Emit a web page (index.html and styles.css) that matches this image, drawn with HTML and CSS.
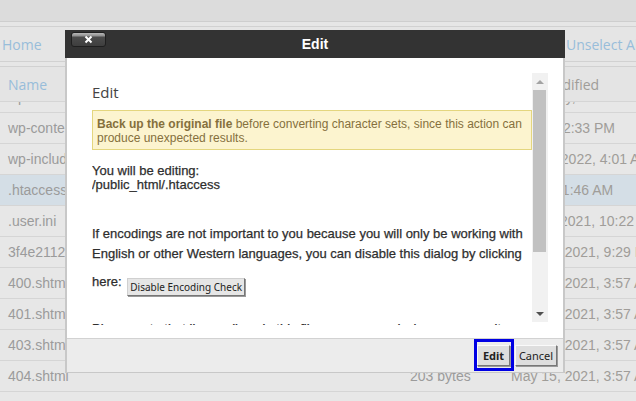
FILE: index.html
```html
<!DOCTYPE html>
<html lang="en">

<head>
    <meta charset="UTF-8">
    <meta name="viewport" content="width=device-width, initial-scale=1.0">
    <title>File Manager</title>
    <link rel="stylesheet" href="styles.css">
</head>

<body>
    <!-- file manager behind the dialog -->
    <div class="fm">
        <div class="fm-top"></div>
        <div class="fm-strip"></div>
        <div class="fm-toolbar">
            <span class="tool">Home</span>
            <span class="tool">Unselect All</span>
        </div>
        <div class="fm-strip"></div>
        <div class="fm-row fm-head">
            <span class="col-name">Name</span>
            <span class="col-size">Size</span>
            <span class="col-date">Last Modified</span>
        </div>
        <div class="fm-list">
            <div class="fm-row first-row">
                <span class="col-name">wp-admin</span><span class="col-size">4 KB</span><span class="col-date">Yesterday, 8:15 PM</span>
            </div>
            <div class="fm-row">
                <span class="col-name">wp-content</span><span class="col-size">4 KB</span><span class="col-date">Today, 12:33 PM</span>
            </div>
            <div class="fm-row">
                <span class="col-name">wp-includes</span><span class="col-size">12 KB</span><span class="col-date">Jan 10, 2022, 4:01 AM</span>
            </div>
            <div class="fm-row selected">
                <span class="col-name">.htaccess</span><span class="col-size">1.08 KB</span><span class="col-date">Today, 11:46 AM</span>
            </div>
            <div class="fm-row">
                <span class="col-name">.user.ini</span><span class="col-size">148 bytes</span><span class="col-date">Apr 16, 2021, 10:22 PM</span>
            </div>
            <div class="fm-row">
                <span class="col-name">3f4e2112a9c0.html</span><span class="col-size">52 bytes</span><span class="col-date">May 25, 2021, 9:29 PM</span>
            </div>
            <div class="fm-row">
                <span class="col-name">400.shtml</span><span class="col-size">203 bytes</span><span class="col-date">May 15, 2021, 3:57 AM</span>
            </div>
            <div class="fm-row">
                <span class="col-name">401.shtml</span><span class="col-size">203 bytes</span><span class="col-date">May 15, 2021, 3:57 AM</span>
            </div>
            <div class="fm-row">
                <span class="col-name">403.shtml</span><span class="col-size">203 bytes</span><span class="col-date">May 15, 2021, 3:57 AM</span>
            </div>
            <div class="fm-row">
                <span class="col-name">404.shtml</span><span class="col-size">203 bytes</span><span class="col-date">May 15, 2021, 3:57 AM</span>
            </div>
            <div class="fm-row">
                <span class="col-name">500.shtml</span><span class="col-size">203 bytes</span><span class="col-date">May 15, 2021, 3:57 AM</span>
            </div>
        </div>
    </div>

    <!-- Edit dialog -->
    <div class="dialog">
        <div class="dlg-titlebar">
            <button class="dlg-close" aria-label="Close">
                <svg width="9" height="9" viewBox="0 0 9 9">
                    <path d="M1.5 1.5 L7.5 7.5 M7.5 1.5 L1.5 7.5" stroke="#fff" stroke-width="2" fill="none" />
                </svg>
            </button>
            <div class="dlg-title">Edit</div>
        </div>
        <div class="dlg-panel">
            <div class="dlg-body">
                <div class="dlg-scroll">
                    <h2 class="dlg-heading">Edit</h2>
                    <div class="warning">
                        <strong>Back up the original file</strong> before converting character sets, since this action can produce unexpected results.
                    </div>
                    <p class="editing">You will be editing:<br>/public_html/.htaccess</p>
                    <p class="note">If encodings are not important to you because you will only be working with English or other Western languages, you can disable this dialog by clicking</p>
                    <div class="note here">here: <button class="btn-small">Disable Encoding Check</button></div>
                    <p class="note next">Please note that line endings in this file are preserved when you save it.</p>
                </div>
                <div class="scrollbar">
                    <div class="sb-arrow"><span class="tri-up"></span></div>
                    <div class="sb-thumb"></div>
                    <div class="sb-track"></div>
                    <div class="sb-arrow"><span class="tri-down"></span></div>
                </div>
            </div>
            <div class="dlg-footer">
                <span class="focus-ring"><button class="btn btn-edit">Edit</button></span>
                <button class="btn btn-cancel">Cancel</button>
            </div>
        </div>
    </div>
</body>

</html>
```

FILE: styles.css
```css
* {
    margin: 0;
    padding: 0;
    box-sizing: border-box;
}

body {
    width: 636px;
    height: 401px;
    overflow: hidden;
    position: relative;
    background-color: #e6e6e6;
    font-family: "Liberation Sans", Arial, sans-serif;
}

/* file manager (washed out behind the overlay) */
.fm-top {
    height: 22px;
    background-color: #dcdcdc;
    border-bottom: 1px solid #cecece;
}

.fm-strip {
    height: 5px;
    background-color: #e6e6e6;
    border-bottom: 1px solid #d1d1d1;
}

.fm-toolbar {
    height: 35px;
    display: grid;
    grid-template-columns: 564px auto;
    align-items: center;
    padding-left: 2px;
    background-color: #e5e5e5;
    border-bottom: 1px solid #d1d1d1;
    white-space: nowrap;
}

.tool {
    font-family: "Open Sans", sans-serif;
    font-size: 14px;
    color: #98bdda;
}

.fm-row {
    display: grid;
    grid-template-columns: 400px 111px 1fr;
    align-items: center;
    height: 31px;
    border-bottom: 1px solid #d5d5d5;
    background-color: #e7e7e7;
    font-size: 14px;
    color: #9b9b9b;
    white-space: nowrap;
}

.fm-head {
    height: 35px;
    background-color: #e4e4e4;
    font-family: "Open Sans", sans-serif;
    color: #98bdda;
}

.fm-list {
    display: flow-root;
    height: 299px;
    overflow: hidden;
}

.first-row {
    margin-top: -20px;
}

.fm-row.selected {
    background-color: #d4dee6;
}

.col-name {
    padding-left: 8px;
    overflow: hidden;
}

.col-size {
    padding-left: 10px;
}

.col-date {
    color: #a09d99;
}

/* dialog */
.dialog {
    position: absolute;
    left: 65px;
    top: 30px;
    width: 500px;
}

.dlg-titlebar {
    height: 28px;
    display: grid;
    grid-template-columns: 1fr auto 1fr;
    background-color: #333;
}

.dlg-close {
    grid-column: 1;
    grid-row: 1;
    justify-self: start;
    width: 35px;
    height: 15px;
    margin: 2px 0 0 6px;
    border: 1px solid #1f1f1f;
    border-radius: 3px;
    background: linear-gradient(#b8b8b8 0, #8e8e8e 3px, #4c4c4c 4px, #3e3e3e 100%);
    display: flex;
    align-items: center;
    justify-content: center;
}

.dlg-title {
    grid-column: 2;
    grid-row: 1;
    align-self: center;
    font-size: 14px;
    font-weight: bold;
    color: #fff;
}

.dlg-panel {
    border: 2px solid #c8c8c8;
    border-top: none;
    border-bottom-width: 1px;
}

.dlg-body {
    display: flex;
    align-items: flex-start;
    padding: 15px 15px 13px 25px;
    background-color: #fff;
}

.dlg-scroll {
    flex: 1;
    height: 252px;
    overflow: hidden;
    padding-top: 9px;
    color: #2e2e2e;
}

.dlg-heading {
    font-family: "Open Sans", sans-serif;
    font-size: 15px;
    font-weight: normal;
    line-height: 20px;
    color: #444;
    margin-bottom: 8px;
}

.warning {
    background-color: #fcf4cf;
    border: 1px solid #e4d67e;
    padding: 6px 5px 4px 4px;
    font-size: 12px;
    line-height: 14px;
    color: #85703d;
}

.editing {
    margin-top: 14px;
    font-size: 13px;
    line-height: 14px;
    -webkit-text-stroke: 0.25px #2e2e2e;
}

.note {
    margin-top: 32px;
    font-size: 13px;
    line-height: 19.5px;
    -webkit-text-stroke: 0.25px #2e2e2e;
}

.note.here {
    margin-top: 9px;
}

.note.next {
    margin-top: 23px;
}

.btn-small {
    font-family: "Noto Sans", sans-serif;
    font-size: 10px;
    line-height: 14px;
    padding: 1px 2px;
    margin-left: 2px;
    vertical-align: -5px;
    background-color: #e6e6e6;
    color: #222;
    border: 1px solid;
    border-color: #d0d0d0 #767676 #767676 #d0d0d0;
    box-shadow: 1px 1px 0 #9a9a9a;
    -webkit-text-stroke: 0;
}

.scrollbar {
    width: 16px;
    height: 249px;
    display: flex;
    flex-direction: column;
    background-color: #f1f1f1;
}

.sb-arrow {
    height: 17px;
    display: flex;
    align-items: center;
    justify-content: center;
}

.tri-up {
    border-left: 4px solid transparent;
    border-right: 4px solid transparent;
    border-bottom: 4px solid #a3a3a3;
}

.tri-down {
    border-left: 4px solid transparent;
    border-right: 4px solid transparent;
    border-top: 4px solid #505050;
}

.sb-thumb {
    height: 162px;
    margin: 0 2px 0 1px;
    background-color: #c1c1c1;
}

.sb-track {
    flex: 1;
}

.dlg-footer {
    display: flex;
    justify-content: flex-end;
    align-items: flex-start;
    height: 34px;
    padding: 0 6px 0 0;
    background-color: #ececec;
    border-top: 1px solid #d2d2d2;
}

.focus-ring {
    display: flex;
    border: 3px solid #0000e4;
    padding: 3px 1px 2px 0;
    margin-right: 1px;
}

.btn {
    height: 21px;
    font-family: "Noto Sans", sans-serif;
    font-size: 11px;
    line-height: 15px;
    color: #222;
    background-color: #dedede;
    border: 1px solid;
    border-color: #fafafa #777 #777 #fafafa;
    box-shadow: 1px 1px 0 #9a9a9a;
    text-align: center;
}

.btn-edit {
    width: 33px;
    font-weight: bold;
}

.btn-cancel {
    width: 42px;
    margin-top: 6px;
}
```
